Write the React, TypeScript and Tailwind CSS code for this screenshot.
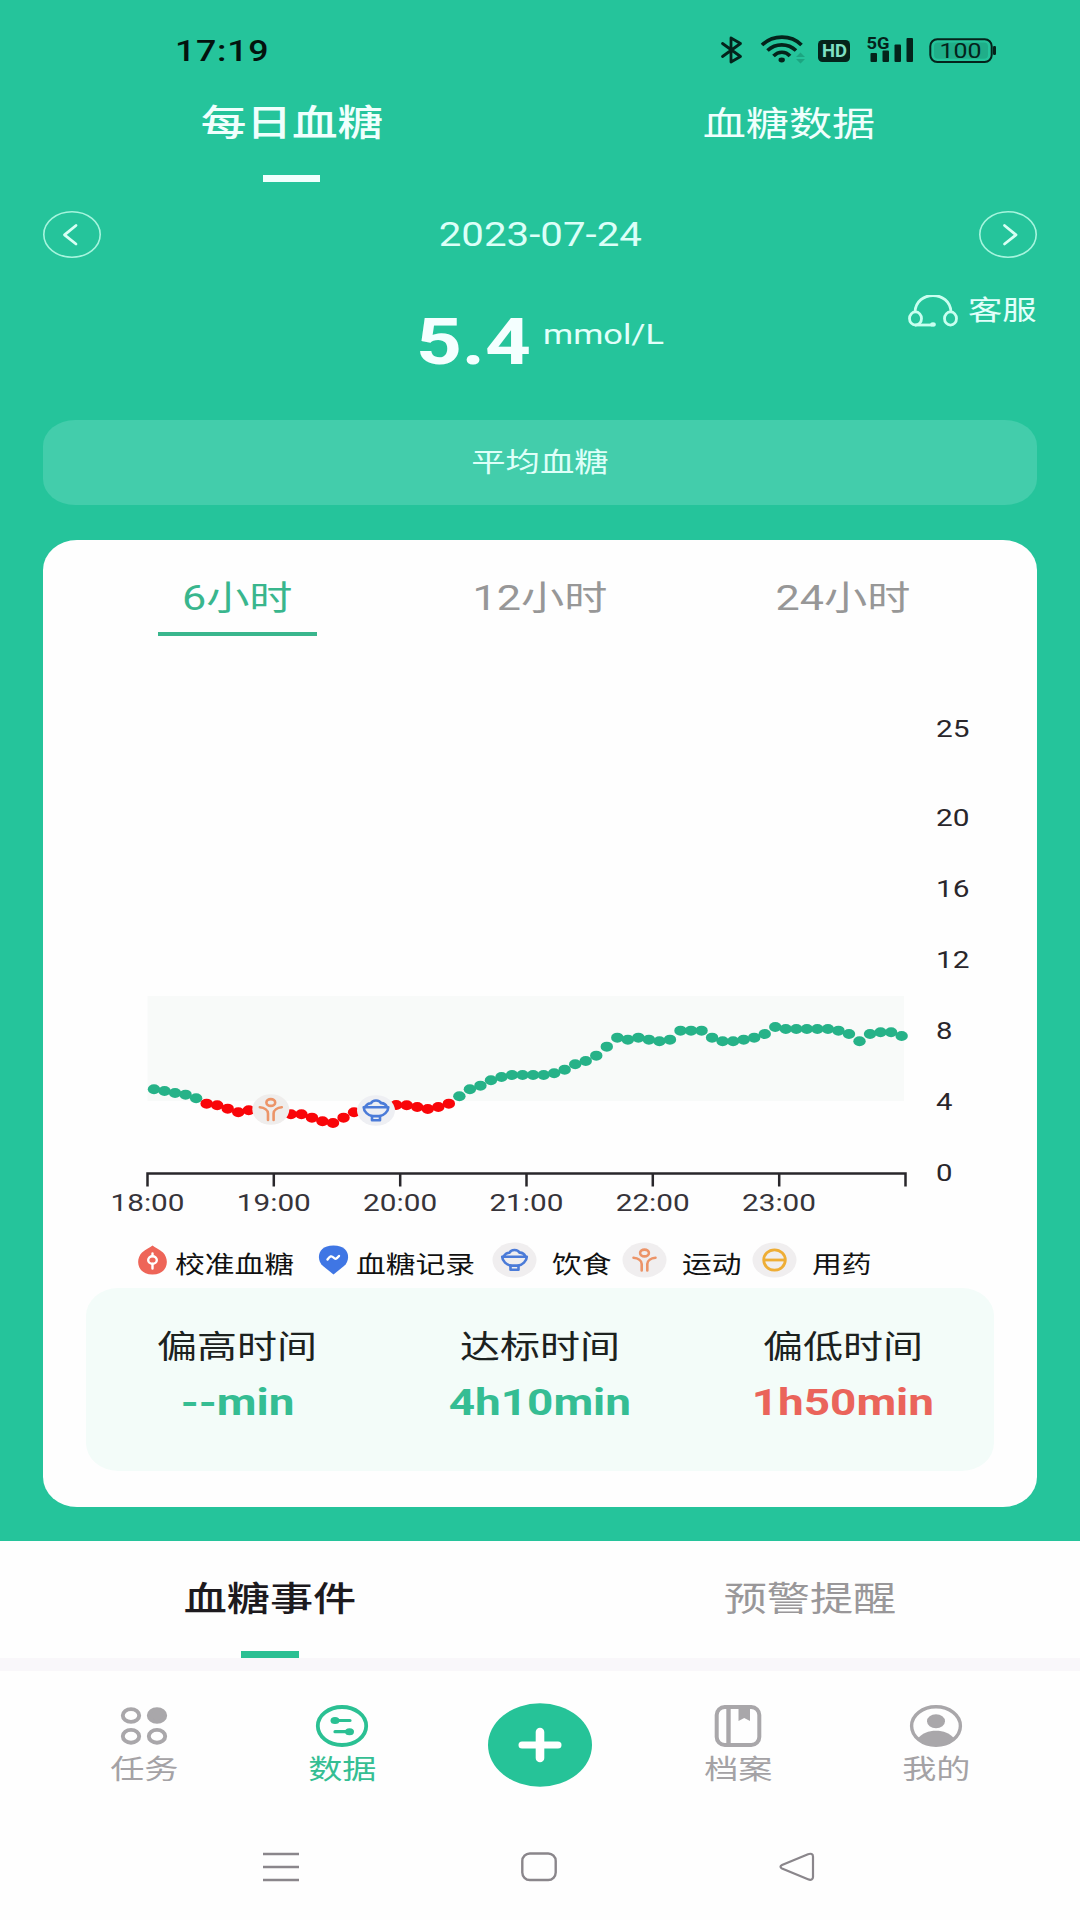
import React from "react";

const STRETCH = "inline-block whitespace-nowrap scale-x-[1.25]";
const STRETCH_L = "block whitespace-nowrap origin-left scale-x-[1.25]";

const levels = [
  327, 332, 338, 343, 354, 370, 375, 385, 396, 390, 390, 394, 398, 402, 402, 412, 423, 428, 412, 396, 388, 382, 377,
  374, 375, 380, 386, 380, 370, 348, 327, 316, 300, 290, 284, 284, 284, 284, 279, 268, 252, 242, 226, 199, 172, 178,
  172, 178, 183, 178, 151, 151, 151, 172, 183, 183, 178, 172, 161, 140, 146, 146, 146, 146, 146, 151, 161, 183, 161,
  156, 156, 167,
];
const dotColor = (i: number) => (i >= 5 && i <= 28 ? "#f90509" : "#26b288");

const yLabels = [
  { v: "25", y: 729 },
  { v: "20", y: 818 },
  { v: "16", y: 889 },
  { v: "12", y: 960 },
  { v: "8", y: 1031 },
  { v: "4", y: 1102 },
  { v: "0", y: 1173 },
];
const hours = ["18:00", "19:00", "20:00", "21:00", "22:00", "23:00"];

function FoodGlyph() {
  return (
    <g fill="none" stroke="#4b7bd8" strokeWidth="2.6" strokeLinejoin="round" strokeLinecap="round">
      <path d="M-11 -3.5C-9 -6.5 -7 -7.5 -5 -7.3C-3.5 -11 3.5 -11 5 -7.3C7 -7.5 9.5 -6.5 11 -3.5" />
      <path d="M-12.3 -3.2H12.3C12.3 1.5 7.5 4.8 4 5.6H-4C-7.5 4.8 -12.3 1.5 -12.3 -3.2Z" />
      <path d="M-4 5.6V9.8H4V5.6" />
    </g>
  );
}
function SportGlyph() {
  return (
    <g fill="none" stroke="#ec9468" strokeWidth="2.6" strokeLinecap="round">
      <ellipse cx="0" cy="-7" rx="4.4" ry="3.4" />
      <path d="M-11 -2.3C-6.5 -1.8 -2.8 0.5 -2.8 4V10.5M11 -2.3C6.5 -1.8 2.8 0.5 2.8 4V10.5" />
    </g>
  );
}

function LegendDisc({ children }: { children: React.ReactNode }) {
  return (
    <svg width="45" height="36" viewBox="-22.5 -18 45 36" className="shrink-0">
      <ellipse rx="22" ry="17.5" fill="#f0eeef" />
      {children}
    </svg>
  );
}

function StatusBar() {
  return (
    <div className="flex h-[102px] items-center justify-between pr-[84px] pl-[175px]">
      <span className="block origin-left scale-x-[1.19] text-[30px] leading-[40px] font-medium tracking-[0.6px] text-[#03130e]">
        17:19
      </span>
      <svg width="276" height="48" viewBox="720 27 276 48" fill="#04231b" className="font-[Roboto]">
        <path d="M722.5 43.5L740.5 56.5L731 62V38L740.5 43.5L722.5 56.5" fill="none" stroke="#04231b" strokeWidth="2.8" strokeLinejoin="round" strokeLinecap="round" />
        <g fill="none" stroke="#04231b" strokeWidth="3.7">
          <path d="M762 45C773 34.5 791 34.5 801.5 45" />
          <path d="M767.5 50.5C775.5 43 788 43 796 50.5" />
          <path d="M773.5 56C778.5 51 785.5 51 790 56" />
        </g>
        <ellipse cx="781.7" cy="60" rx="3.2" ry="2.4" />
        <path d="M796 57L800.5 52.5L805 57ZM796 59L800.5 63.5L805 59Z" fill="#1ca581" />
        <rect x="818" y="40" width="32" height="22" rx="4.5" />
        <text x="822" y="57" fontSize="17.5" fontWeight="700" fill="#7fe0c4" textLength="25" lengthAdjust="spacingAndGlyphs">HD</text>
        <text x="866.5" y="49" fontSize="17" fontWeight="700" textLength="23" lengthAdjust="spacingAndGlyphs">5G</text>
        <rect x="870.5" y="53" width="6.5" height="9" rx="1" />
        <rect x="882.5" y="50.5" width="6.5" height="11.5" rx="1" />
        <rect x="894.5" y="44.5" width="6.5" height="17.5" rx="1" />
        <rect x="906.5" y="38" width="6.5" height="24" rx="1" />
        <rect x="930.3" y="39.2" width="61.4" height="22.8" rx="7" fill="none" stroke="#04231b" strokeWidth="2" />
        <rect x="934" y="42.5" width="54" height="16.2" rx="4" fill="#20ae89" />
        <rect x="993" y="46" width="3" height="9" rx="1.2" />
        <text x="939.5" y="57.5" fontSize="19.5" textLength="42" lengthAdjust="spacingAndGlyphs">100</text>
      </svg>
    </div>
  );
}

function RoundArrow({ d }: { d: string }) {
  return (
    <svg width="58" height="47" viewBox="0 0 58 47" fill="none">
      <ellipse cx="29" cy="23.5" rx="28.2" ry="22.7" stroke="#a6f5de" strokeWidth="1.6" />
      <path d={d} stroke="#d8fff4" strokeWidth="2.8" strokeLinecap="round" strokeLinejoin="round" />
    </svg>
  );
}

function Header() {
  return (
    <>
      <StatusBar />
      <div className="flex h-[80px] text-[#f0fffd]">
        <div className="ml-[43px] flex w-[497px] flex-col items-center">
          <span className={`${STRETCH} mt-[2px] text-[36.5px] leading-[40px] font-medium`}>每日血糖</span>
          <span className="mt-[31px] h-[6.5px] w-[57px] bg-[#f0fffd]" />
        </div>
        <div className="flex w-[497px] flex-col items-center">
          <span className={`${STRETCH} mt-[2px] text-[34.5px] leading-[40px]`}>血糖数据</span>
        </div>
      </div>
      <div className="mt-[29px] flex h-[47px] items-center justify-between px-[43px] text-[#dcfff8]">
        <RoundArrow d="M33 14.5L21.5 23.8L33 33" />
        <span className="inline-block scale-x-[1.22] text-[33px] leading-[40px] whitespace-nowrap">2023-07-24</span>
        <RoundArrow d="M25.5 14.5L37 23.8L25.5 33" />
      </div>
      <div className="flex h-[162px] items-start pr-[43px] pl-[416px] text-[#e2fffa]">
        <span className="mt-[44px] block w-[127px] origin-left scale-x-[1.23] text-[65px] leading-[80px] font-bold text-[#f4ffff]">5.4</span>
        <span className="mt-[57px] block w-[120px] origin-left scale-x-[1.25] text-[27.5px] leading-[40px]">mmol/L</span>
        <div className="mt-[33px] ml-auto flex h-[40px] items-center">
          <svg width="51" height="33" viewBox="908 294 51 33" fill="none" stroke="#c9fff0" strokeWidth="2.8" className="shrink-0">
            <path d="M915 311C916 289 950 289 951 311" />
            <ellipse cx="915.5" cy="317.5" rx="6" ry="6.6" />
            <ellipse cx="950.5" cy="317.5" rx="6" ry="6.6" />
            <path d="M915 324H932" />
            <ellipse cx="933" cy="323.5" rx="2.8" ry="2.2" fill="#c9fff0" stroke="none" />
          </svg>
          <span className={`${STRETCH_L} ml-[9px] w-[69px] text-[27.5px] leading-[40px]`}>客服</span>
        </div>
      </div>
      <div className="mx-[43px] flex h-[85px] items-center justify-center rounded-[32px/26px] bg-[#43cdab] text-[#defff8]">
        <span className={`${STRETCH} text-[27.5px] leading-[40px]`}>平均血糖</span>
      </div>
    </>
  );
}

function Chart() {
  return (
    <svg width="994" height="599" viewBox="43 636 994 599" className="block font-[Roboto]">
      <rect x="147.5" y="996" width="756.5" height="105" fill="#f8faf9" />
      {levels.map((v, i) => (
        <ellipse key={i} cx={154 + i * 10.53} cy={980.3 + v / 3} rx="6.2" ry="5" fill={dotColor(i)} />
      ))}
      <g transform="translate(270.8 1109.5)">
        <ellipse rx="18.5" ry="15.3" fill="#efedec" />
        <SportGlyph />
      </g>
      <g transform="translate(376 1110.5)">
        <ellipse rx="19" ry="15.3" fill="#eeeff3" />
        <FoodGlyph />
      </g>
      <path d="M147.5 1186.5V1173.5H905.5V1186.5M273.8 1173.5V1186.5M400.2 1173.5V1186.5M526.5 1173.5V1186.5M652.8 1173.5V1186.5M779.2 1173.5V1186.5" fill="none" stroke="#29272b" strokeWidth="2.5" />
      {yLabels.map((l) => (
        <text key={l.v} x="936" y={l.y + 8.4} fontSize="23.5" fill="#29262b" textLength={l.v.length > 1 ? 33.5 : 16.5} lengthAdjust="spacingAndGlyphs">
          {l.v}
        </text>
      ))}
      {hours.map((h, i) => (
        <text key={h} x={110.5 + i * 126.3} y="1211" fontSize="24" fill="#37343a" textLength="74" lengthAdjust="spacingAndGlyphs">
          {h}
        </text>
      ))}
    </svg>
  );
}

function Legend() {
  return (
    <div className="mt-[7px] flex h-[35px] items-center pl-[94px] text-[23.8px] leading-[36px] text-[#111]">
      <svg width="31" height="30" viewBox="0 0 31 30" className="shrink-0">
        <path d="M15.5 0.5C18 2.5 22 4 26 7.5C33 14.5 31 29.5 15.5 29.5C0 29.5 -2 14.5 5 7.5C9 4 13 2.5 15.5 0.5Z" fill="#ee6558" />
        <g fill="none" stroke="#fff" strokeWidth="2.4" strokeLinecap="round">
          <ellipse cx="15.5" cy="15" rx="4.3" ry="3.8" />
          <path d="M15.5 8.5V11M15.5 19V23.5" />
        </g>
      </svg>
      <span className={`${STRETCH_L} ml-[7px] w-[143px] pt-[10px]`}>校准血糖</span>
      <svg width="31" height="30" viewBox="0 0 31 30" className="shrink-0">
        <path d="M15.5 29.5L5 21C-2 15 -1 0.5 15.5 0.5C32 0.5 33 15 26 21Z" fill="#3f76e4" />
        <path d="M9.5 14.5C12 11 13.5 10.5 15.5 12.5C17.5 14.5 18.5 14 21 11" fill="none" stroke="#fff" strokeWidth="2.4" strokeLinecap="round" />
      </svg>
      <span className={`${STRETCH_L} ml-[7px] w-[136px] pt-[10px]`}>血糖记录</span>
      <LegendDisc>
        <FoodGlyph />
      </LegendDisc>
      <span className={`${STRETCH_L} ml-[15px] w-[70px] pt-[10px]`}>饮食</span>
      <LegendDisc>
        <SportGlyph />
      </LegendDisc>
      <span className={`${STRETCH_L} ml-[15px] w-[70px] pt-[10px]`}>运动</span>
      <LegendDisc>
        <g fill="none" stroke="#eead35" strokeWidth="2.8">
          <ellipse rx="10.8" ry="10.2" />
          <path d="M-11 0H11" />
        </g>
      </LegendDisc>
      <span className={`${STRETCH_L} ml-[15px] w-[60px] pt-[10px]`}>用药</span>
    </div>
  );
}

const ranges = [
  { label: "6小时", on: true },
  { label: "12小时", on: false },
  { label: "24小时", on: false },
];
const stats = [
  { label: "偏高时间", value: "--min", tone: "text-[#35bd93]" },
  { label: "达标时间", value: "4h10min", tone: "text-[#35bd93]" },
  { label: "偏低时间", value: "1h50min", tone: "text-[#ea645b]" },
];

function Card() {
  return (
    <div className="mx-[43px] mt-[35px] h-[967px] rounded-[34px/30px] bg-[#fefefe]">
      <div className="grid h-[96px] grid-cols-3 pt-[38px] pr-[43px] pl-[43px]">
        {ranges.map((r) => (
          <div key={r.label} className={r.on ? "flex flex-col items-center text-[#39b68d]" : "flex flex-col items-center text-[#979797]"}>
            <span className={`${STRETCH} text-[34.5px] leading-[40px]`}>{r.label}</span>
            {r.on && <span className="mt-[14px] h-[4px] w-[159px] bg-[#39b68d]" />}
          </div>
        ))}
      </div>
      <Chart />
      <Legend />
      <div className="mx-[43px] mt-[11px] grid h-[183px] grid-cols-3 rounded-[32px/28px] bg-[#f3fcf9] pt-[37px]">
        {stats.map((s) => (
          <div key={s.label} className="flex flex-col items-center">
            <span className={`${STRETCH} text-[32px] leading-[44px] text-[#1c2220]`}>{s.label}</span>
            <span className={`${STRETCH} mt-[12px] text-[36.7px] leading-[44px] font-bold ${s.tone}`}>{s.value}</span>
          </div>
        ))}
      </div>
    </div>
  );
}

function BottomTabs() {
  return (
    <div className="grid h-[130px] grid-cols-2 border-b-[13px] border-[#f9f7fa] pt-[38px]">
      <div className="flex flex-col items-center">
        <span className={`${STRETCH} text-[34.5px] leading-[40px] font-medium text-[#1d1a1e]`}>血糖事件</span>
        <span className="mt-[32px] h-[7px] w-[58px] bg-[#2cc093]" />
      </div>
      <div className="flex flex-col items-center">
        <span className={`${STRETCH} text-[34.5px] leading-[40px] text-[#999799]`}>预警提醒</span>
      </div>
    </div>
  );
}

function NavItem({ label, tone, children }: { label: string; tone: string; children: React.ReactNode }) {
  return (
    <div className={`flex flex-col items-center ${tone}`}>
      <svg width="54" height="42" viewBox="-27 -21 54 42">
        {children}
      </svg>
      <span className={`${STRETCH} mt-[3px] text-[27.3px] leading-[40px]`}>{label}</span>
    </div>
  );
}

function NavBar() {
  return (
    <div className="mx-[45px] grid h-[149px] grid-cols-5 pt-[34px]">
      <NavItem label="任务" tone="text-[#a4a2a5]">
        <g fill="none" stroke="#a9a7aa" strokeWidth="3.9">
          <ellipse cx="-13" cy="-10.5" rx="8.2" ry="6.4" />
          <ellipse cx="13" cy="-10.5" rx="8.2" ry="6.4" fill="#a9a7aa" />
          <ellipse cx="-13" cy="10.3" rx="8.2" ry="6.4" />
          <ellipse cx="13" cy="10.3" rx="8.2" ry="6.4" />
        </g>
      </NavItem>
      <NavItem label="数据" tone="text-[#35be93]">
        <g fill="none" stroke="#2bc093" strokeWidth="3.8" strokeLinecap="round">
          <ellipse rx="24.2" ry="19" />
          <path d="M-7 -5.5H8M-7 5.7H7" strokeWidth="3.2" />
        </g>
        <ellipse cx="-7" cy="-5.5" rx="4.5" ry="3.5" fill="#2bc093" />
        <ellipse cx="7.5" cy="5.7" rx="4.5" ry="3.5" fill="#2bc093" />
      </NavItem>
      <div className="-mt-[2px] flex justify-center">
        <svg width="104" height="84" viewBox="0 0 104 84">
          <ellipse cx="52" cy="42" rx="52" ry="41.7" fill="#26c398" />
          <path d="M34 42H70" stroke="#fff" strokeWidth="7" strokeLinecap="round" />
          <path d="M52 29V55" stroke="#fff" strokeWidth="8.6" strokeLinecap="round" />
        </svg>
      </div>
      <NavItem label="档案" tone="text-[#a4a2a5]">
        <rect x="-21.3" y="-19" width="42.6" height="38" rx="8" fill="none" stroke="#a9a7aa" strokeWidth="4" />
        <path d="M-9.5 -19V19" stroke="#a9a7aa" strokeWidth="4.4" />
        <path d="M0.5 -19H12V-5L6.2 -8L0.5 -5Z" fill="#a9a7aa" />
      </NavItem>
      <NavItem label="我的" tone="text-[#a4a2a5]">
        <ellipse rx="24.4" ry="19.2" fill="none" stroke="#a9a7aa" strokeWidth="3.4" />
        <ellipse cx="0" cy="-4.8" rx="9" ry="7" fill="#a9a7aa" />
        <path d="M-18 12.5C-11 2 11 2 18 12.5C9 21.5 -9 21.5 -18 12.5Z" fill="#a9a7aa" />
      </NavItem>
    </div>
  );
}

function SystemBar() {
  return (
    <div className="flex h-[94px] items-center justify-center gap-[222px] pr-[2px] text-[#8a868b]">
      <svg width="36" height="30" viewBox="0 0 36 30" stroke="currentColor" strokeWidth="2.6">
        <path d="M0 2H36M0 15H36M0 28H36" />
      </svg>
      <svg width="36" height="30" viewBox="0 0 36 30" fill="none" stroke="currentColor" strokeWidth="2.4">
        <rect x="1.3" y="1.5" width="33.4" height="26.5" rx="7.5" />
      </svg>
      <svg width="36" height="30" viewBox="0 0 36 30" fill="none" stroke="currentColor" strokeWidth="2.2">
        <path d="M3 13L29 2.2C32 1.2 34 2 34 4.5V25C34 27.5 32 28.5 29 27.3L3 16.5C1 15.6 1 13.9 3 13Z" />
      </svg>
    </div>
  );
}

export default function App() {
  return (
    <div className="h-[1920px] w-[1080px] overflow-hidden bg-[#fefefe] font-[Roboto,'Noto_Sans_CJK_SC',sans-serif]">
      <div className="h-[1541px] bg-[#25c49b]">
        <Header />
        <Card />
      </div>
      <BottomTabs />
      <NavBar />
      <SystemBar />
    </div>
  );
}
